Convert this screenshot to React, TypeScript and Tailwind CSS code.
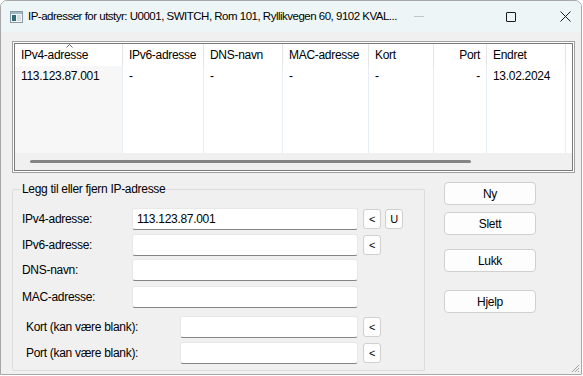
import React from 'react';

const font = { fontFamily: '"Segoe UI", "Liberation Sans", Arial, sans-serif' };

const columns = [
  { title: 'IPv4-adresse', width: 'w-[108px]', value: '113.123.87.001', right: false, sorted: true },
  { title: 'IPv6-adresse', width: 'w-[81px]', value: '-', right: false },
  { title: 'DNS-navn', width: 'w-[79px]', value: '-', right: false },
  { title: 'MAC-adresse', width: 'w-[86px]', value: '-', right: false },
  { title: 'Kort', width: 'w-[65px]', value: '-', right: false },
  { title: 'Port', width: 'w-[53px]', value: '-', right: true },
  { title: 'Endret', width: 'w-[79px]', value: '13.02.2024', right: false },
];

const SmallButton: React.FC<{ label: string }> = ({ label }) => (
  <button className="w-[18px] h-[20px] flex items-center justify-center rounded-[3px] border border-[#d0d0d0] bg-[#fdfdfd] text-[11px] leading-none text-black">
    {label}
  </button>
);

const Field: React.FC<{ value?: string; width: string }> = ({ value, width }) => (
  <div className={`${width} h-[22px] shrink-0 flex items-center px-[4px] bg-white border border-[#e8e8e8] border-b-[#858585] rounded-[3px] text-black`}>
    {value}
  </div>
);

const DialogButton: React.FC<{ label: string; className?: string }> = ({ label, className }) => (
  <button className={`w-[92px] h-[23px] flex items-center justify-center rounded-[4px] border border-[#d0d0d0] bg-[#fdfdfd] text-[12px] tracking-[-0.3px] text-black ${className ?? ''}`}>
    {label}
  </button>
);

const App: React.FC = () => {
  return (
    <div className="w-[583px] h-[376px] bg-white" style={font}>
      <div className="relative w-[582px] h-[375px] flex flex-col rounded-t-[7px] border border-[#a8a8a8] bg-[#f0f0f0] overflow-hidden">
        {/* title bar */}
        <div className="h-[31px] shrink-0 flex items-center bg-[#eef5f6]">
          <svg width="13" height="12" viewBox="0 0 13 12" className="shrink-0 ml-[9px] mr-[5px]">
            <rect x="0.5" y="0.5" width="12" height="11" fill="#f4f4f4" stroke="#8a9aa4" />
            <rect x="1" y="1" width="11" height="2" fill="#9fb7c7" />
            <rect x="2" y="4" width="4" height="6" fill="#2e6e78" />
            <rect x="7" y="4" width="4" height="6" fill="#d8dde2" />
          </svg>
          <span className="text-[11.5px] tracking-[-0.5px] text-black whitespace-nowrap">
            IP-adresser for utstyr: U0001, SWITCH, Rom 101, Ryllikvegen 60, 9102 KVAL...
          </span>
          <div className="ml-auto flex items-center shrink-0">
            <div className="w-[10px] h-px bg-[#c4c4c4] mr-[82px]" />
            <div className="w-[10px] h-[10px] border border-[#1a1a1a] rounded-[1px] mr-[44px]" />
            <svg width="11" height="11" viewBox="0 0 11 11" className="mr-[10px]">
              <path d="M0.5 0.5 L10.5 10.5 M10.5 0.5 L0.5 10.5" stroke="#1a1a1a" strokeWidth="1" />
            </svg>
          </div>
        </div>

        {/* list view */}
        <div className="shrink-0 ml-[11px] mt-[9px] w-[563px] h-[132px] border border-[#a0a0a0] p-px bg-white">
          <div className="w-full h-full border border-[#7a7a7a] flex flex-col bg-white overflow-hidden">
            <div className="flex h-[22px] shrink-0 text-[12px] tracking-[-0.3px] text-black">
              {columns.map((c) => (
                <div
                  key={c.title}
                  className={`${c.width} shrink-0 relative flex items-center px-[6px] whitespace-nowrap border-r border-[#e5e5e5] ${c.right ? 'justify-end' : ''}`}
                >
                  {c.sorted && (
                    <svg width="7" height="4" viewBox="0 0 7 4" className="absolute left-[51px] top-0">
                      <path d="M0.5 3.5 L3.5 0.5 L6.5 3.5" stroke="#6a6a6a" fill="none" />
                    </svg>
                  )}
                  {c.title}
                </div>
              ))}
            </div>
            <div className="flex flex-1 text-[12px] tracking-[-0.3px] text-black">
              {columns.map((c) => (
                <div
                  key={c.title}
                  className={`${c.width} shrink-0 border-r border-[#e6edf6] ${c.sorted ? 'bg-[#f7f7f7]' : ''}`}
                >
                  <div className={`h-[19px] flex items-center px-[6px] whitespace-nowrap ${c.right ? 'justify-end' : ''}`}>{c.value}</div>
                </div>
              ))}
            </div>
            <div className="h-[17px] shrink-0 bg-[#f0f0f0] flex items-center pl-[15px]">
              <div className="w-[441px] h-[3px] rounded-full bg-[#858585]" />
            </div>
          </div>
        </div>

        {/* bottom */}
        <div className="shrink-0 flex ml-[11px] mt-[9px]">
          <fieldset className="w-[413px] h-[189px] border border-[#dcdcdc] rounded-[2px] px-[9px]">
            <legend className="ml-[-1px] px-px text-[12px] tracking-[-0.3px] text-black leading-[14px]">Legg til eller fjern IP-adresse</legend>
            <div className="flex flex-col text-[12px] tracking-[-0.3px] text-black">
              <div className="flex items-center mt-[12px]">
                <span className="w-[110px]">IPv4-adresse:</span>
                <Field width="w-[226px]" value="113.123.87.001" />
                <div className="ml-[5px] flex gap-[4px]">
                  <SmallButton label="<" />
                  <SmallButton label="U" />
                </div>
              </div>
              <div className="flex items-center mt-[4px]">
                <span className="w-[110px]">IPv6-adresse:</span>
                <Field width="w-[226px]" />
                <div className="ml-[5px]">
                  <SmallButton label="<" />
                </div>
              </div>
              <div className="flex items-center mt-[3px]">
                <span className="w-[110px]">DNS-navn:</span>
                <Field width="w-[226px]" />
              </div>
              <div className="flex items-center mt-[5px]">
                <span className="w-[110px]">MAC-adresse:</span>
                <Field width="w-[226px]" />
              </div>
              <div className="flex items-center mt-[8px]">
                <span className="w-[158px] pl-[4px]">Kort (kan være blank):</span>
                <Field width="w-[178px]" />
                <div className="ml-[5px]">
                  <SmallButton label="<" />
                </div>
              </div>
              <div className="flex items-center mt-[4px]">
                <span className="w-[158px] pl-[4px]">Port (kan være blank):</span>
                <Field width="w-[178px]" />
                <div className="ml-[5px]">
                  <SmallButton label="<" />
                </div>
              </div>
            </div>
          </fieldset>
          <div className="ml-[19px] flex flex-col">
            <DialogButton label="Ny" />
            <DialogButton label="Slett" className="mt-[7px]" />
            <DialogButton label="Lukk" className="mt-[14px]" />
            <DialogButton label="Hjelp" className="mt-[18px]" />
          </div>
        </div>

        {/* resize grip */}
        <svg width="10" height="10" viewBox="0 0 10 10" className="absolute right-px bottom-px">
          <path d="M9 2 L2 9 M9 5 L5 9 M9 8 L8 9" stroke="#a0a0a0" strokeWidth="1" />
        </svg>
      </div>
    </div>
  );
};

export default App;
